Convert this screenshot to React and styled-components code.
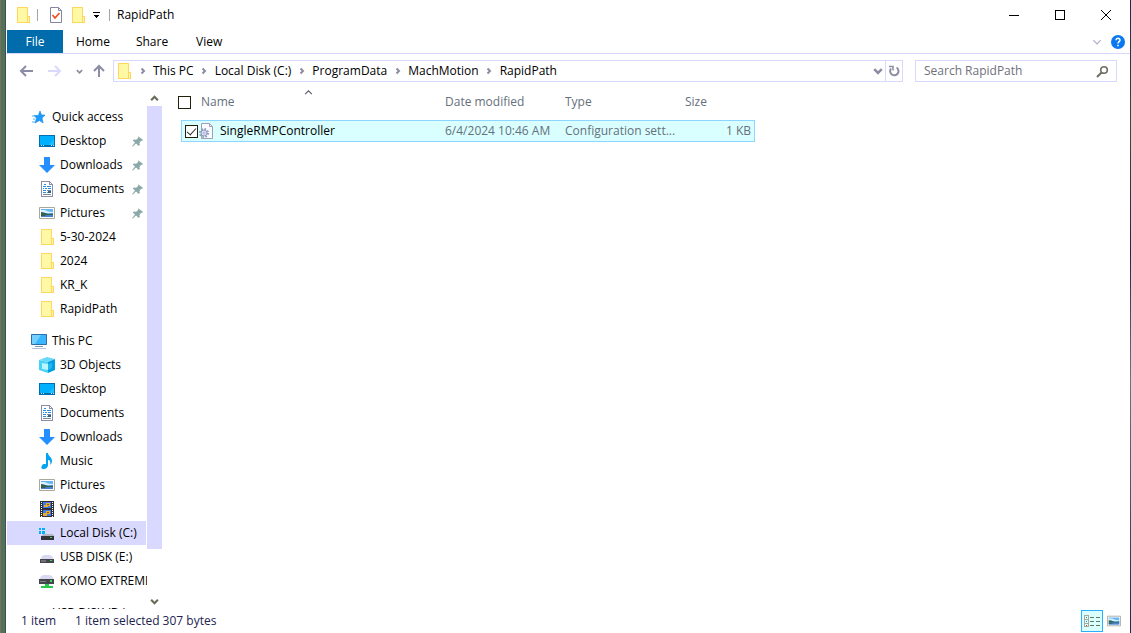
import React, { useState } from "react";
import styled, { createGlobalStyle } from "styled-components";

const GlobalStyle = createGlobalStyle`
  * {
    box-sizing: border-box;
  }
  body {
    margin: 0;
    background: #ffffff;
    color: #000000;
    font-family: "Open Sans", "Noto Sans", sans-serif;
    font-size: 12px;
    line-height: 16px;
  }
  button,
  input {
    font: inherit;
    color: inherit;
  }
  svg {
    display: block;
    flex: none;
  }
`;

const Screen = styled.div`
  display: grid;
  grid-template-columns: 6px minmax(0, 1fr) 1px;
  height: 100vh;
`;
const Edge = styled.div`
  background: ${(p) =>
    p.$right
      ? "linear-gradient(#22284a, #3a4a3a 20%, #22284a 40%, #5f7a80 60%, #22284a)"
      : "linear-gradient(90deg, #7d6d5c 1px, #4f7358 1px, #4f7358 5px, #4b4b55 5px)"};
`;
const Window = styled.div`
  display: flex;
  flex-direction: column;
  min-height: 0;
  background: #ffffff;
`;

const TitleBar = styled.header`
  display: flex;
  align-items: center;
  height: 29px;
  padding: 0 1px 0 9px;
`;
const QuickTools = styled.div`
  display: flex;
  align-items: center;
  height: 30px;
`;
const Divider = styled.span`
  width: 1px;
  height: 12px;
  margin: 0 7px 0 6px;
  background: #a5a5a0;
`;
const ToolButton = styled.button`
  display: flex;
  align-items: center;
  justify-content: center;
  width: ${(p) => p.$width || 22}px;
  height: 22px;
  padding: 0;
  border: 0;
  background: none;
`;
const Title = styled.h1`
  flex: 1;
  margin: 0;
  font-size: 12px;
  font-weight: 400;
`;
const CaptionButton = styled(ToolButton)`
  width: 46px;
  height: 28px;
`;

const Tabs = styled.nav`
  display: flex;
  height: 25px;
  padding: 1px 2px 0 1px;
  border-bottom: 1px solid #d9d9ff;
`;
const Tab = styled.button`
  min-width: 56px;
  padding: 0 13px;
  border: 0;
  background: none;
  ${(p) =>
    p.$file &&
    `
    background: #006cac;
    color: #ffffff;
  `}
`;
const TabsEnd = styled.div`
  display: flex;
  align-items: center;
  margin-left: auto;
`;

const AddressRow = styled.div`
  display: flex;
  align-items: center;
  height: 34px;
  padding: 0 13px 0 9px;
`;
const AddressBox = styled.div`
  display: flex;
  flex: 1;
  align-items: center;
  height: 22px;
  margin: 0 12px 0 2px;
  padding-left: 2px;
  border: 1px solid #d9d9ff;
`;
const Crumbs = styled.div`
  display: flex;
  flex: 1;
  align-items: center;
`;
const Crumb = styled.button`
  padding: 0;
  border: 0;
  background: none;
`;
const CrumbArrow = styled.span`
  display: flex;
  justify-content: center;
  width: 21px;
`;
const Refresh = styled(ToolButton)`
  width: 17px;
  height: 20px;
  border-left: 1px solid #d9d9ff;
`;
const SearchBox = styled.label`
  display: flex;
  align-items: center;
  width: 202px;
  height: 22px;
  padding: 0 7px 0 8px;
  border: 1px solid #d9d9ff;
`;
const SearchInput = styled.input`
  flex: 1;
  min-width: 0;
  padding: 0;
  border: 0;
  outline: 0;
  background: none;
  &::placeholder {
    color: #70707c;
    opacity: 1;
  }
`;

const Body = styled.div`
  display: flex;
  flex: 1;
  min-height: 0;
`;
const Sidebar = styled.aside`
  display: flex;
  width: 156px;
  padding-top: 2px;
`;
const Tree = styled.nav`
  flex: 1;
  min-width: 0;
  overflow: hidden;
  padding: 15px 1px 0 1px;
`;
const Group = styled.div`
  margin-bottom: 8px;
`;
const TreeItem = styled.a`
  display: flex;
  align-items: center;
  gap: 5px;
  height: 24px;
  padding-left: ${(p) => (p.$root ? 24 : 32)}px;
  background: ${(p) => (p.$selected ? "#d9d9ff" : "none")};
  color: inherit;
  text-decoration: none;
  white-space: nowrap;
`;
const TreeText = styled.span`
  flex: 1;
`;
const PinSlot = styled.span`
  padding-right: 3px;
`;
const Scroll = styled.div`
  display: flex;
  flex-direction: column;
  width: 15px;
`;
const ScrollButton = styled(ToolButton)`
  width: 15px;
  height: 16px;
`;
const ScrollTrack = styled.div`
  flex: 1;
`;
const ScrollThumb = styled.div`
  height: 91%;
  background: #d9d9ff;
`;

const Files = styled.main`
  flex: 1;
  min-width: 0;
  padding-left: 16px;
`;
const FileTable = styled.table`
  display: block;
  border-spacing: 0;
`;
const HeadRow = styled.tr`
  display: grid;
  grid-template-columns: 23px 244px 120px 120px 70px;
  align-items: center;
  position: relative;
  height: 32px;
  padding-bottom: 4px;
  color: #65707c;
`;
const FileRow = styled.tr`
  display: grid;
  grid-template-columns: 17px 246px 120px 120px 69px;
  align-items: center;
  width: 574px;
  height: 22px;
  margin-left: 3px;
  border: 1px solid #8cd6ff;
  background: #d9ffff;
  color: #65707c;
`;
const HeadCell = styled.th`
  padding: 0;
  font-weight: 400;
  text-align: left;
`;
const Cell = styled.td`
  padding: 0 ${(p) => (p.$right ? 3 : 0)}px 0 0;
  text-align: ${(p) => (p.$right ? "right" : "left")};
  white-space: nowrap;
`;
const FileName = styled.span`
  display: flex;
  align-items: center;
  gap: 5px;
  color: #000000;
`;
const SortMark = styled.span`
  position: absolute;
  top: 0;
  left: 126px;
`;
const Check = styled.input`
  appearance: none;
  display: block;
  position: relative;
  width: 13px;
  height: 13px;
  margin: 0 0 0 ${(p) => p.$inset || 0}px;
  border: 1px solid #20200c;
  background: #ffffff;
  &:checked::after {
    content: "";
    position: absolute;
    left: 3px;
    top: 0;
    width: 4px;
    height: 8px;
    border: solid #303030;
    border-width: 0 1px 1px 0;
    transform: rotate(42deg);
  }
`;

const StatusBar = styled.footer`
  display: flex;
  align-items: center;
  gap: 3px;
  height: 24px;
  padding: 0 5px 0 15px;
  color: #1c2450;
`;
const Count = styled.span`
  min-width: 51px;
`;
const Views = styled.div`
  display: flex;
  margin-left: auto;
`;
const ViewButton = styled(ToolButton)`
  border: 1px solid ${(p) => (p.$active ? "#26b0ff" : "transparent")};
  background: ${(p) => (p.$active ? "#d9ffff" : "none")};
`;

const Svg = ({ w = 16, h = 16, crisp, children }) => (
  <svg
    width={w}
    height={h}
    viewBox={`0 0 ${w} ${h}`}
    fill="none"
    shapeRendering={crisp ? "crispEdges" : "auto"}
    aria-hidden="true"
  >
    {children}
  </svg>
);

const Chevron = ({ dir = "down", size = 8, color = "#8c8ca0", width = 2 }) => {
  const d = {
    down: "M1 2.5 4 5.5 7 2.5",
    up: "M1 5.5 4 2.5 7 5.5",
    right: "M2.5 1.5 5 4 2.5 6.5",
  }[dir];
  return (
    <svg width={size} height={size} viewBox="0 0 8 8" fill="none" aria-hidden="true">
      <path d={d} stroke={color} strokeWidth={width} />
    </svg>
  );
};

const FolderIcon = () => (
  <Svg crisp>
    <path d="M2 0h11v16H2z" fill="#ffd75e" />
    <path d="M3 1h9v14H3z" fill="#fff9a6" />
    <path d="M12 9h3v7h-3z" fill="#ffd75e" />
    <path d="M13 10h1v5h-1z" fill="#fff9a6" />
  </Svg>
);
const StarIcon = () => (
  <Svg>
    <path
      d="m9 2 1.500 4H14l-3 3 1.200 5L8.500 11.500l-4.500 2.500 1.600-4.800L3 6.500h4.300z"
      fill="#1a9cff"
      stroke="#1687e0"
      strokeWidth=".6"
    />
    <path d="M1 7h3M2 10h2.500M1 13h3" stroke="#4db5ff" />
  </Svg>
);
const DesktopIcon = () => (
  <Svg crisp>
    <path d="M0 2h16v12H0z" fill="#006fb0" />
    <path d="M1 3h14v9H1z" fill="#00b1ff" />
    <path d="M15 6v6H9z" fill="#22bcff" />
    <path d="M2 12.500h1m1 0h1m7 0h1m1 0h1" stroke="#b6e6ff" />
  </Svg>
);
const DownloadIcon = () => (
  <Svg>
    <path d="M5 0h6v8h5l-8 8-8-8h5z" fill="#2490ff" />
  </Svg>
);
const DocumentIcon = () => (
  <Svg crisp>
    <path d="M2.500.5h8l3 3v12h-11z" fill="#fff" stroke="#8e8ea6" />
    <path d="M10.500.5v3h3" stroke="#8e8ea6" />
    <path d="M5 3.500h2M4 5.500h3M8 5.500h4M4 7.500h1m1 0h2m1 0h3M4 9.500h3M4 11.500h3" stroke="#2590e8" />
    <path d="M8 9.500h4M8 11.500h4M4 13.500h8" stroke="#7c8c9c" />
    <path d="M9 10h3v2H9z" fill="#35627c" />
  </Svg>
);
const PictureIcon = ({ size = 16 }) => (
  <svg width={size} height={size} viewBox="0 0 16 16" fill="none" aria-hidden="true">
    <path d="M.5 2.500h15v11H.5z" fill="#fff" stroke="#a8a89c" />
    <path d="M2 4h12v8H2z" fill="#69b4f5" />
    <path d="M2 5h4l3 1.500 5 .5v1H2z" fill="#d5f2ff" />
    <path d="M2 7l3 .5L9 9l5-.5V10H2z" fill="#355f50" />
    <path d="M2 10h12v2H2z" fill="#4a80d0" />
    <path d="M2 10h6l-3 1H2z" fill="#355f50" />
  </svg>
);
const PcIcon = () => (
  <Svg>
    <path d="M.5 1.500h15v10H.5z" fill="#39b6ff" stroke="#2b6ea8" />
    <path d="M1 2h9L4 11H1z" fill="#75d0ff" />
    <path d="M4 13.500h8" stroke="#7e9cae" />
    <path d="M1 15.500h14" stroke="#b0c4dc" />
  </Svg>
);
const CubeIcon = () => (
  <Svg>
    <path d="m0 3 8-3 8 2-7 3z" fill="#68d9fa" />
    <path d="m0 3 9 2v11l-9-3z" fill="#46d2f7" />
    <path d="m9 5 7-3v11l-7 3z" fill="#009fe4" />
    <path d="m3 6 6 1v6l-6-1z" fill="#b9f6ff" />
    <path d="m9 7 4-1v5l-4 2z" fill="#27b7f0" />
  </Svg>
);
const MusicIcon = () => (
  <Svg>
    <path
      d="M7 0h2c0 3 4 4 4 8 0 2-1 3-2 4 1-3 0-5-2-5v5c0 2.500-2 4-4.500 4S2 14.500 3 12.500c.8-1.500 2.500-1.800 4-1.300z"
      fill="#00a4f0"
    />
  </Svg>
);
const VideoIcon = () => (
  <Svg crisp>
    <path d="M1 0h14v16H1z" fill="#303038" />
    <path d="M2.500 1v15M13.500 1v15" stroke="#fff" strokeDasharray="1 1" />
    <path d="M4 1h8v6H4zM4 9h8v6H4z" fill="#3e7ae8" />
    <path d="M5 4h2V2h4v3H9v1H5zM4 12h3v-2h4v3H8v2H4z" fill="#e5ad32" />
    <path d="M8 3h2v1H8zM8 11h2v1H8z" fill="#a04830" />
  </Svg>
);
const SystemDriveIcon = () => (
  <Svg crisp>
    <path d="M0 3h2v2H0zM3 3h3v2H3zM0 6h2v3H0zM3 6h3v3H3z" fill="#00b1ff" />
    <path d="M4 9h9l2 2H2z" fill="#b4b4c4" />
    <path d="M2 11h13v4H2z" fill="#33333a" />
    <path d="M11 12h2v1h-2z" fill="#35e04c" />
  </Svg>
);
const DriveIcon = () => (
  <Svg>
    <path d="M2 10c0-3 2-4 4-4h4c2 0 4 1 4 4z" fill="#d9d9f2" />
    <path d="M1 10h14v4H1z" fill="#44444c" />
    <path d="M2 11h5v2H2z" fill="#707078" />
    <path d="M11 11h2v1h-2z" fill="#35e04c" />
  </Svg>
);
const NetDriveIcon = () => (
  <Svg>
    <path d="M1 6c0-3 2-4 4-4h5c2 0 4 1 4 4z" fill="#d9d9f2" />
    <path d="M0 6h15v5H0z" fill="#44444c" />
    <path d="M1 8h6v1H1z" fill="#808088" />
    <path d="M11 7h2v2h-2z" fill="#35e04c" />
    <path d="M6 11h4v2h4v2H2v-2h4z" fill="#28c84a" />
  </Svg>
);
const PinIcon = () => (
  <Svg w={11} h={11}>
    <path
      d="m6 0 5 4-1 1-1-.3L7.500 7l.3 2-1 1L4 7.500.800 10.500 0 10.300 3 6.500.8 4.500l1-1 2.400.2L6.500 1.500z"
      fill="#8ca9a9"
    />
  </Svg>
);
const IniIcon = () => (
  <Svg>
    <path d="M2.500.5h8l3 3v12h-11z" fill="#fafaff" stroke="#a0a0b4" />
    <path d="M10.500.5v3h3" stroke="#a0a0b4" />
    <circle cx="5" cy="10" r="4" stroke="#8c9cb8" strokeWidth="2" strokeDasharray="1.600 1.540" />
    <circle cx="5" cy="10" r="3" fill="#e2e2ff" stroke="#8c9cb8" />
    <circle cx="5" cy="10" r="1" fill="#fff" stroke="#8c9cb8" strokeWidth=".7" />
  </Svg>
);
const PropertiesIcon = () => (
  <Svg>
    <path d="M2.500.5h8l3 3v12h-11z" fill="#fff" stroke="#8585a0" />
    <path d="M10.500.5v3h3" stroke="#8585a0" />
    <path d="m4.500 8 2.500 3 4.500-5" stroke="#f04c20" strokeWidth="1.700" />
  </Svg>
);
const Arrow = ({ d, color }) => (
  <Svg w={14} h={14}>
    <path d={d} stroke={color} strokeWidth="2" />
  </Svg>
);
const DetailsIcon = () => (
  <Svg crisp>
    <path d="M.5 2.500h4v11h-4zM.5 6h4M.5 10h4" stroke="#a8a89c" />
    <path d="M2 4h1v1H2z" fill="#507050" />
    <path d="M2 8h1v1H2z" fill="#2090ff" />
    <path d="M2 12h1v1H2z" fill="#e03020" />
    <path d="M6 4.500h4m2 0h4M6 8.500h4m2 0h4M6 12.500h4m2 0h4" stroke="#66755f" />
  </Svg>
);

const quickAccess = [
  { name: "Desktop", icon: <DesktopIcon />, pinned: true },
  { name: "Downloads", icon: <DownloadIcon />, pinned: true },
  { name: "Documents", icon: <DocumentIcon />, pinned: true },
  { name: "Pictures", icon: <PictureIcon />, pinned: true },
  { name: "5-30-2024", icon: <FolderIcon /> },
  { name: "2024", icon: <FolderIcon /> },
  { name: "KR_K", icon: <FolderIcon /> },
  { name: "RapidPath", icon: <FolderIcon /> },
];

const thisPc = [
  { name: "3D Objects", icon: <CubeIcon /> },
  { name: "Desktop", icon: <DesktopIcon /> },
  { name: "Documents", icon: <DocumentIcon /> },
  { name: "Downloads", icon: <DownloadIcon /> },
  { name: "Music", icon: <MusicIcon /> },
  { name: "Pictures", icon: <PictureIcon /> },
  { name: "Videos", icon: <VideoIcon /> },
  { name: "Local Disk (C:)", icon: <SystemDriveIcon />, selected: true },
  { name: "USB DISK (E:)", icon: <DriveIcon /> },
  { name: "KOMO EXTREME", icon: <NetDriveIcon /> },
];

const path = ["This PC", "Local Disk (C:)", "ProgramData", "MachMotion", "RapidPath"];

const TreeGroup = ({ name, icon, items }) => (
  <Group>
    <TreeItem href="#" $root>
      {icon}
      {name}
    </TreeItem>
    {items.map((item) => (
      <TreeItem href="#" key={item.name} $selected={item.selected}>
        {item.icon}
        <TreeText>{item.name}</TreeText>
        {item.pinned && (
          <PinSlot>
            <PinIcon />
          </PinSlot>
        )}
      </TreeItem>
    ))}
  </Group>
);

const App = () => {
  const [checked, setChecked] = useState(true);
  const [search, setSearch] = useState("");

  return (
    <Screen>
      <GlobalStyle />
      <Edge />
      <Window>
        <TitleBar>
          <QuickTools>
            <FolderIcon />
            <Divider />
            <ToolButton aria-label="Properties">
              <PropertiesIcon />
            </ToolButton>
            <ToolButton aria-label="New folder">
              <FolderIcon />
            </ToolButton>
            <ToolButton $width={14} aria-label="Customize">
              <Svg w={7} h={6} crisp>
                <path d="M0 0h7v1H0z" fill="#000" />
                <path d="M0 3h7L3.500 6z" fill="#000" />
              </Svg>
            </ToolButton>
            <Divider />
          </QuickTools>
          <Title>RapidPath</Title>
          <CaptionButton aria-label="Minimize">
            <Svg w={10} h={10} crisp>
              <path d="M0 5h10v1H0z" fill="#000" />
            </Svg>
          </CaptionButton>
          <CaptionButton aria-label="Maximize">
            <Svg w={10} h={10} crisp>
              <path d="M.5.5h9v9h-9z" stroke="#000" />
            </Svg>
          </CaptionButton>
          <CaptionButton aria-label="Close">
            <Svg w={10} h={10}>
              <path d="m0 0 10 10M10 0 0 10" stroke="#000" />
            </Svg>
          </CaptionButton>
        </TitleBar>

        <Tabs>
          <Tab $file>File</Tab>
          <Tab>Home</Tab>
          <Tab>Share</Tab>
          <Tab>View</Tab>
          <TabsEnd>
            <ToolButton aria-label="Expand ribbon">
              <Chevron size={10} color="#b0b0cc" width={1} />
            </ToolButton>
            <ToolButton aria-label="Help" $width={20}>
              <Svg w={14} h={14}>
                <circle cx="7" cy="7" r="7" fill="#0a78f0" />
                <path
                  d="M5 5.300c0-2.800 4.200-2.500 4 0C8.900 6.700 7 6.700 7 8.500M7 9.800v1.500"
                  stroke="#fff"
                  strokeWidth="1.500"
                />
              </Svg>
            </ToolButton>
          </TabsEnd>
        </Tabs>

        <AddressRow>
          <ToolButton aria-label="Back">
            <Arrow d="M14 7H2M7 2 2 7l5 5" color="#8c8ca6" />
          </ToolButton>
          <ToolButton aria-label="Forward" $width={36}>
            <Arrow d="M0 7h12M7 2l5 5-5 5" color="#d9d9ff" />
          </ToolButton>
          <ToolButton aria-label="Recent locations" $width={12}>
            <Chevron size={7} />
          </ToolButton>
          <ToolButton aria-label="Up" $width={26}>
            <Arrow d="M8 13V2M3 7l5-5 5 5" color="#8c8ca6" />
          </ToolButton>
          <AddressBox>
            <FolderIcon />
            <Crumbs>
              {path.map((name) => (
                <React.Fragment key={name}>
                  <CrumbArrow>
                    <Chevron dir="right" />
                  </CrumbArrow>
                  <Crumb>{name}</Crumb>
                </React.Fragment>
              ))}
            </Crumbs>
            <ToolButton aria-label="Previous locations" $width={15}>
              <Chevron size={10} />
            </ToolButton>
            <Refresh aria-label="Refresh">
              <Svg w={12} h={12}>
                <path d="M8.500 2.500A4.200 4.200 0 1 1 3 3.500" stroke="#8c8ca6" strokeWidth="2" />
                <path d="M1 1.500h4v4" stroke="#8c8ca6" strokeWidth="1.500" />
              </Svg>
            </Refresh>
          </AddressBox>
          <SearchBox>
            <SearchInput
              type="text"
              aria-label="Search RapidPath"
              placeholder="Search RapidPath"
              value={search}
              onChange={(event) => setSearch(event.target.value)}
            />
            <Svg w={13} h={13}>
              <circle cx="8" cy="5" r="3.300" stroke="#6c6c62" strokeWidth="1.600" />
              <path d="M5.500 7.500 1 12" stroke="#6c6c62" strokeWidth="2" />
            </Svg>
          </SearchBox>
        </AddressRow>

        <Body>
          <Sidebar>
            <Tree>
              <TreeGroup name="Quick access" icon={<StarIcon />} items={quickAccess} />
              <TreeGroup name="This PC" icon={<PcIcon />} items={thisPc} />
              <TreeGroup name="USB DISK (D:)" icon={<DriveIcon />} items={[]} />
            </Tree>
            <Scroll>
              <ScrollButton aria-label="Scroll up">
                <Chevron dir="up" size={9} color="#6c6c5c" />
              </ScrollButton>
              <ScrollTrack>
                <ScrollThumb />
              </ScrollTrack>
              <ScrollButton aria-label="Scroll down">
                <Chevron size={9} color="#6c6c5c" />
              </ScrollButton>
            </Scroll>
          </Sidebar>

          <Files>
            <FileTable>
              <thead>
                <HeadRow>
                  <HeadCell>
                    <Check type="checkbox" aria-label="Select all" />
                  </HeadCell>
                  <HeadCell>
                    Name
                    <SortMark>
                      <Chevron dir="up" size={9} color="#5c5c68" width={1} />
                    </SortMark>
                  </HeadCell>
                  <HeadCell>Date modified</HeadCell>
                  <HeadCell>Type</HeadCell>
                  <HeadCell>Size</HeadCell>
                </HeadRow>
              </thead>
              <tbody>
                <FileRow>
                  <Cell>
                    <Check
                      type="checkbox"
                      aria-label="Select SingleRMPController"
                      $inset={3}
                      checked={checked}
                      onChange={(event) => setChecked(event.target.checked)}
                    />
                  </Cell>
                  <Cell>
                    <FileName>
                      <IniIcon />
                      SingleRMPController
                    </FileName>
                  </Cell>
                  <Cell>6/4/2024 10:46 AM</Cell>
                  <Cell>Configuration sett...</Cell>
                  <Cell $right>1 KB</Cell>
                </FileRow>
              </tbody>
            </FileTable>
          </Files>
        </Body>

        <StatusBar>
          <Count>1 item</Count>
          <span>1 item selected</span>
          <span>307 bytes</span>
          <Views>
            <ViewButton $active aria-label="Details view">
              <DetailsIcon />
            </ViewButton>
            <ViewButton aria-label="Large icons view">
              <PictureIcon size={14} />
            </ViewButton>
          </Views>
        </StatusBar>
      </Window>
      <Edge $right />
    </Screen>
  );
};
export default App;
